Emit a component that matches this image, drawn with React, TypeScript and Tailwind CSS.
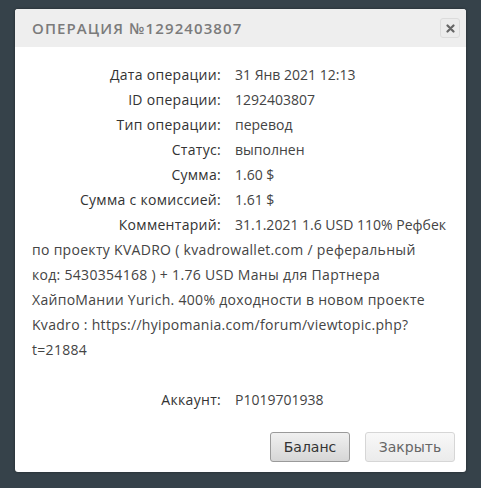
import React from "react";

const rows: [string, string][] = [
  ["Дата операции:", "31 Янв 2021 12:13"],
  ["ID операции:", "1292403807"],
  ["Тип операции:", "перевод"],
  ["Статус:", "выполнен"],
  ["Сумма:", "1.60 $"],
  ["Сумма с комиссией:", "1.61 $"],
];

const commentLines = [
  "по проекту KVADRO ( kvadrowallet.com / реферальный",
  "код: 5430354168 ) + 1.76 USD Маны для Партнера",
  "ХайпоМании Yurich. 400% доходности в новом проекте",
  "Kvadro : https://hyipomania.com/forum/viewtopic.php?",
  "t=21884",
];

function Row({ label, value }: { label: string; value: string }) {
  return (
    <div className="flex whitespace-nowrap">
      <span className="w-[189px] shrink-0 text-right tracking-[0.3px] text-[#333]">{label}</span>
      <span className="ml-[14px]">{value}</span>
    </div>
  );
}

export default function App() {
  return (
    <div className="h-[488px] w-[481px] bg-[#36424a] pt-[9px] pl-[15px]">
      <div className="w-[451px] h-[463px] overflow-hidden rounded-[3px] bg-white shadow-[0_0_3px_rgba(0,0,0,0.4)]">
        <div className="flex h-[38px] items-center justify-between bg-[#eeeeee] pl-[17px] pr-[6px]">
          <span className="font-['Open_Sans',sans-serif] text-[15px] font-semibold uppercase tracking-[1.1px] text-[#7b7b7b]">
            Операция №1292403807
          </span>
          <button className="flex h-[20px] w-[20px] items-center justify-center rounded-[3px] border border-[#dcdcdc] bg-[#ececec]">
            <svg width="9" height="9" viewBox="0 0 9 9">
              <path d="M1.5 1.5 L7.5 7.5 M7.5 1.5 L1.5 7.5" stroke="#666" strokeWidth="2.2" strokeLinecap="round" />
            </svg>
          </button>
        </div>
        <div className="px-[17px] pt-[15px] font-['Open_Sans',sans-serif] text-[14px] leading-[25px] text-[#444]">
          {rows.map(([k, v]) => (
            <Row key={k} label={k} value={v} />
          ))}
          <Row label="Комментарий:" value="31.1.2021 1.6 USD 110% Рефбек" />
          {commentLines.map((l) => (
            <div key={l} className="whitespace-nowrap tracking-[0.3px]">
              {l}
            </div>
          ))}
          <div className="h-[25px]" />
          <Row label="Аккаунт:" value="P1019701938" />
          <div className="-mr-[6px] mt-[20px] flex justify-end gap-[15px] font-['DejaVu_Sans',sans-serif] text-[14px]">
            <button className="h-[30px] w-[80px] rounded-[3px] border border-[#9a9a9a] bg-gradient-to-b from-[#f0f0f0] to-[#d6d6d6] text-[#333]">
              Баланс
            </button>
            <button className="h-[30px] w-[90px] rounded-[3px] border border-[#d6d6d6] bg-gradient-to-b from-[#f8f8f8] to-[#ebebeb] text-[#666]">
              Закрыть
            </button>
          </div>
        </div>
      </div>
    </div>
  );
}
